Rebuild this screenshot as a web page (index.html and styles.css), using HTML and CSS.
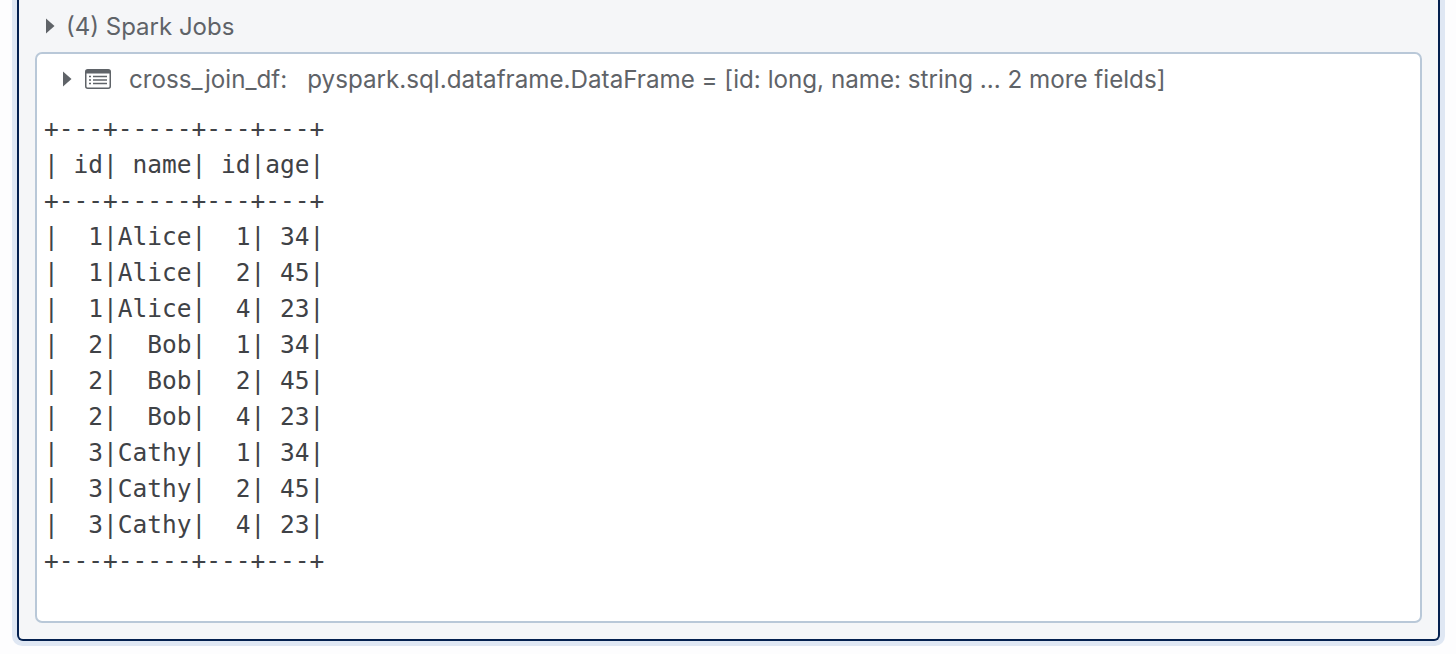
FILE: index.html
```html
<!DOCTYPE html>
<html lang="en">
<head>
  <meta charset="UTF-8">
  <title>cross_join_df</title>
  <link rel="stylesheet" href="styles.css">
</head>
<body>

  <div class="cell-halo">
    <div class="cell">
      <div class="jobs-row">
        <svg class="caret" viewBox="0 0 10 16"><path d="M1 0.500 L9.500 8 L1 15.500 Z"/></svg>
        <span>(4) Spark Jobs</span>
      </div>

      <div class="output">
        <div class="schema-row">
          <svg class="caret" viewBox="0 0 10 16"><path d="M1 0.500 L9.500 8 L1 15.500 Z"/></svg>
          <svg class="table-icon" viewBox="0 0 26 20">
            <rect x="0.750" y="0.750" width="24.500" height="18.500" rx="2" class="frame"/>
            <rect x="1" y="1" width="24" height="3.500" class="head"/>
            <path d="M4 7.500h2M8 7.500h14M4 11h2M8 11h14M4 14.500h2M8 14.500h14" class="lines"/>
          </svg>
          <span class="df-name">cross_join_df:</span>
          <span>pyspark.sql.dataframe.DataFrame = [id: long, name: string ... 2 more fields]</span>
        </div>
<pre class="table-text">+---+-----+---+---+
| id| name| id|age|
+---+-----+---+---+
|  1|Alice|  1| 34|
|  1|Alice|  2| 45|
|  1|Alice|  4| 23|
|  2|  Bob|  1| 34|
|  2|  Bob|  2| 45|
|  2|  Bob|  4| 23|
|  3|Cathy|  1| 34|
|  3|Cathy|  2| 45|
|  3|Cathy|  4| 23|
+---+-----+---+---+</pre>
      </div>
    </div>
  </div>

</body>
</html>
```

FILE: styles.css
```css
html, body {
  margin: 0;
  height: 654px;
  overflow: hidden;
  background: #fdfdfe;
}

body {
  padding: 0 11px 0 12px;
  box-sizing: border-box;
  font-family: Inter, "Liberation Sans", sans-serif;
  color: #5f6368;
}

.cell-halo {
  height: 646px;
  box-sizing: border-box;
  padding: 0 5px 5px;
  background: #dfe7f3;
  border-radius: 0 0 10px 10px;
}

.cell {
  height: 641px;
  box-sizing: border-box;
  padding: 0 16px 16px;
  background: #f5f6f8;
  border: 2px solid #04204f;
  border-top: 0;
  border-radius: 0 0 6px 6px;
}

.jobs-row {
  display: flex;
  align-items: center;
  height: 52px;
  padding-left: 10px;
  gap: 11px;
  font-size: 24px;
  color: #5f6368;
}

.caret {
  width: 10px;
  height: 16px;
  fill: #5f6368;
  flex: none;
}

.output {
  height: 571px;
  box-sizing: border-box;
  background: #fff;
  border: 2px solid #b9c8d8;
  border-radius: 7px;
}

.schema-row {
  display: flex;
  align-items: center;
  height: 50px;
  padding-left: 25px;
  font-size: 24.200px;
  color: #5f6368;
}

.table-icon {
  width: 26px;
  height: 20px;
  margin-left: 13px;
  flex: none;
}

.frame { fill: #fff; stroke: #5f6368; stroke-width: 1.500; }
.head { fill: #5f6368; }
.lines { stroke: #5f6368; stroke-width: 1.500; fill: none; }

.df-name {
  margin-left: 18px;
  margin-right: 20px;
}

.table-text {
  margin: 7px 0 0 7px;
  font-family: "DejaVu Sans Mono", "Liberation Mono", monospace;
  font-size: 24.500px;
  line-height: 36px;
  color: #3f4246;
}
```
